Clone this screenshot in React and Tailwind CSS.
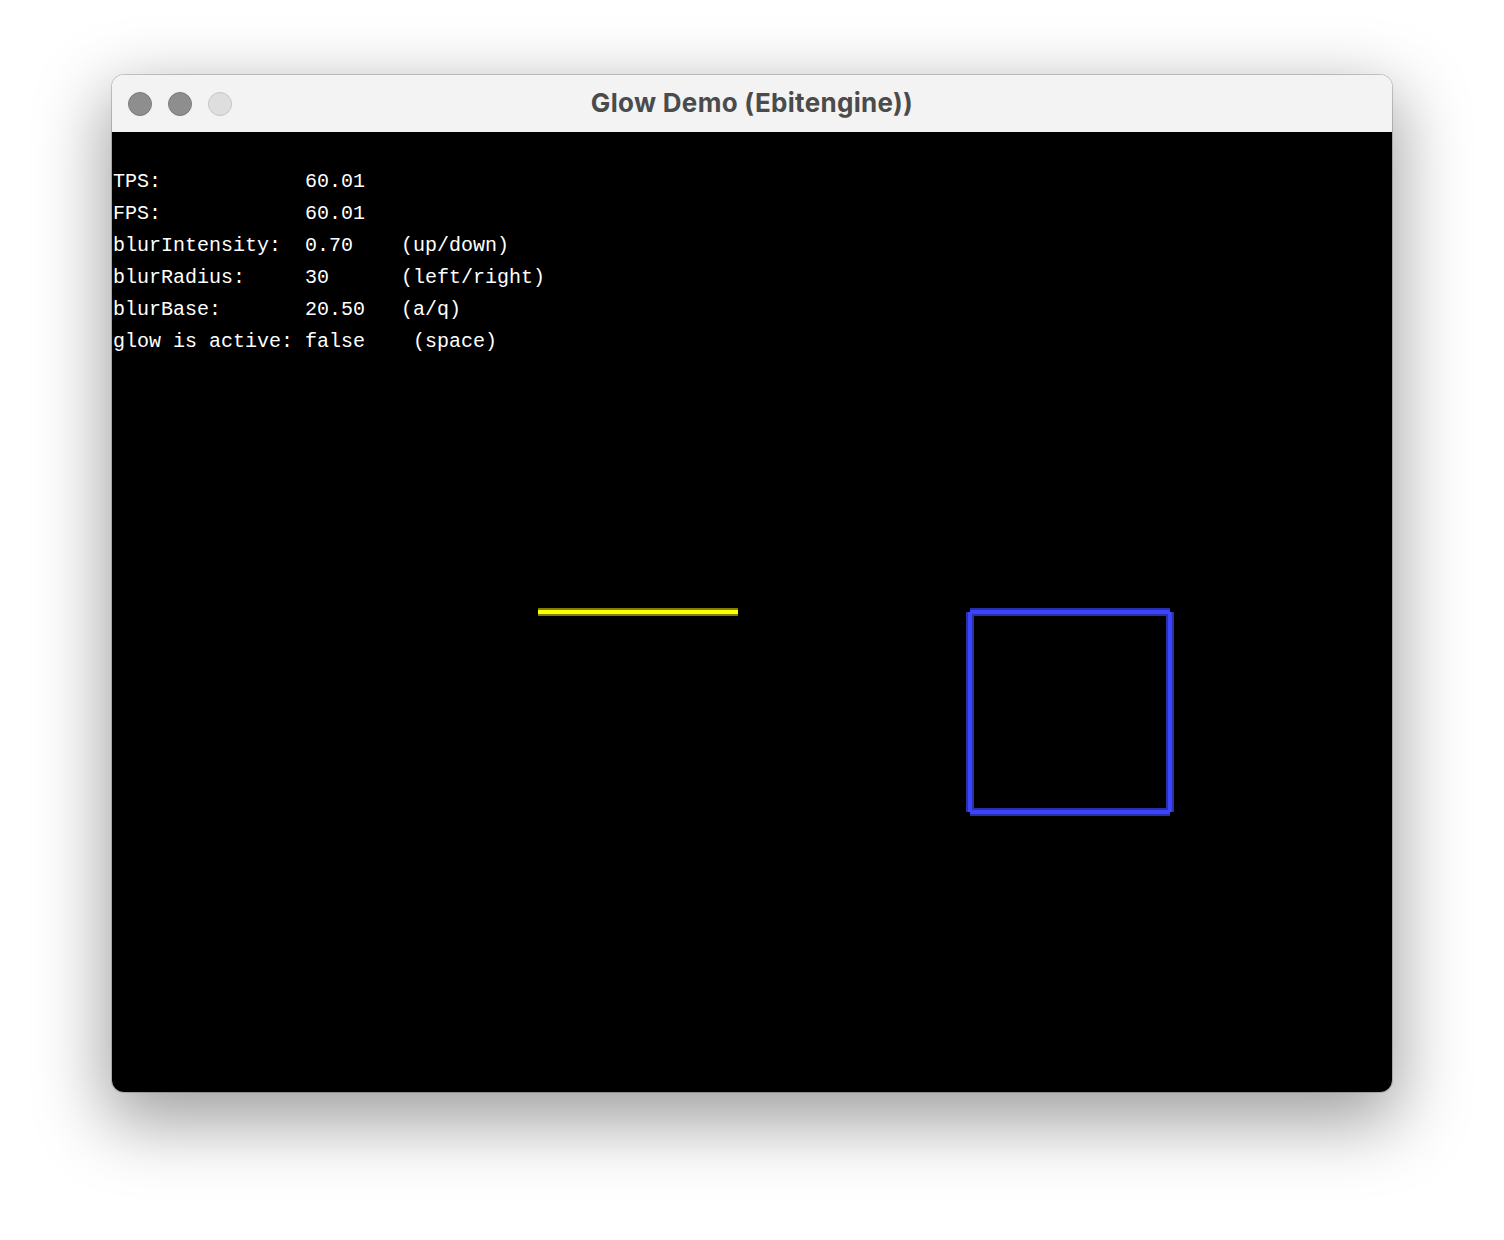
export default function App() {
  const lines = [
    "TPS:            60.01",
    "FPS:            60.01",
    "blurIntensity:  0.70    (up/down)",
    "blurRadius:     30      (left/right)",
    "blurBase:       20.50   (a/q)",
    "glow is active: false    (space)",
  ];
  const dimB = "#2a31a6";
  const brB = "#3a44ff";
  return (
    <div className="w-[1504px] h-[1240px] bg-white pl-[112px] pt-[75px]">
      <div className="w-[1280px] h-[1017px] rounded-[12px] overflow-hidden flex flex-col shadow-[0_24px_70px_6px_rgba(0,0,0,0.38),0_0_0_1px_rgba(0,0,0,0.18)]">
        <div className="h-[57px] bg-[#f3f3f3] relative flex items-center pl-[16px] gap-[16px] shrink-0">
          <div className="w-[24px] h-[24px] rounded-full bg-[#8e8e8e] border border-[#7b7b7b]" />
          <div className="w-[24px] h-[24px] rounded-full bg-[#8e8e8e] border border-[#7b7b7b]" />
          <div className="w-[24px] h-[24px] rounded-full bg-[#dedede] border border-[#c6c6c6]" />
          <div className="absolute inset-0 flex items-center justify-center pb-[2px] pointer-events-none">
            <span className="font-['Inter',sans-serif] font-bold text-[26px] text-[#4b4b4b] tracking-[0.3px]">
              Glow Demo (Ebitengine))
            </span>
          </div>
        </div>
        <div className="relative flex-1 bg-black">
          <div className="pt-[34px] pl-[1px] font-['Liberation_Mono','DejaVu_Sans_Mono',monospace] text-[20px] leading-[32px] text-white whitespace-pre">
            {lines.map((l, i) => (
              <div key={i}>{l}</div>
            ))}
          </div>
          <svg className="absolute inset-0" width="1280" height="960" viewBox="0 0 1280 960">
            <rect x="426" y="476" width="200" height="8" fill="#7f7f00" />
            <rect x="426" y="478" width="200" height="4" fill="#ffff00" />
            <rect x="858" y="476" width="200" height="8" fill={dimB} />
            <rect x="854" y="480" width="8" height="200" fill={dimB} />
            <rect x="1054" y="480" width="8" height="200" fill={dimB} />
            <rect x="858" y="676" width="200" height="8" fill={dimB} />
            <rect x="858" y="478" width="200" height="4" fill={brB} />
            <rect x="856" y="480" width="4" height="200" fill={brB} />
            <rect x="1056" y="480" width="4" height="200" fill={brB} />
            <rect x="858" y="678" width="200" height="4" fill={brB} />
          </svg>
        </div>
      </div>
    </div>
  );
}
